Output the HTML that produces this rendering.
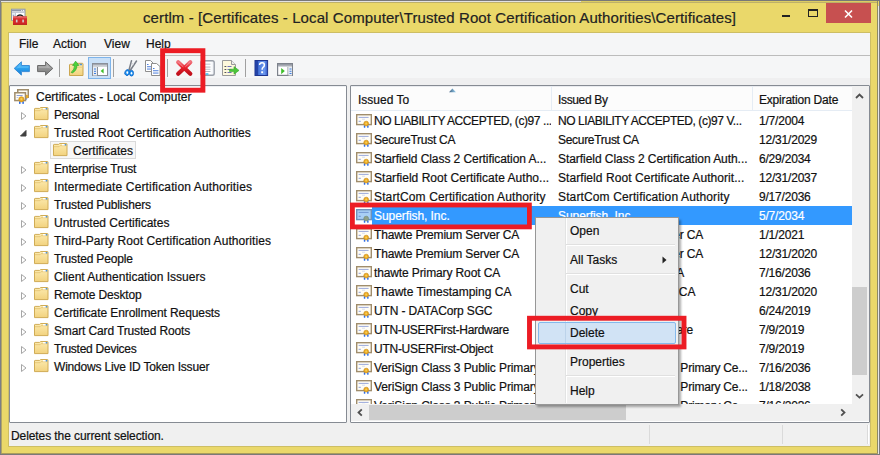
<!DOCTYPE html>
<html><head><meta charset="utf-8">
<style>
*{box-sizing:border-box}
html,body{margin:0;padding:0}
body{width:880px;height:455px;position:relative;overflow:hidden;background:#EAD86A;font-family:"Liberation Sans",sans-serif;font-size:12px;color:#111}
.a{position:absolute}
.t{position:absolute;white-space:pre;line-height:12px;font-size:12px;-webkit-text-stroke:0.2px currentColor}
svg{position:absolute;overflow:visible}
.clip{position:absolute;overflow:hidden}
.in{position:absolute}
</style></head><body>
<svg width="0" height="0" style="position:absolute;left:0;top:0">
<defs>
<linearGradient id="gfold" x1="0" y1="0" x2="0" y2="1"><stop offset="0" stop-color="#FCEBB0"/><stop offset="1" stop-color="#F2D27E"/></linearGradient>
<linearGradient id="gback" x1="0" y1="0" x2="0" y2="1"><stop offset="0" stop-color="#5EC4FA"/><stop offset="0.5" stop-color="#2AA0EE"/><stop offset="1" stop-color="#1878D0"/></linearGradient>
<linearGradient id="gfwd" x1="0" y1="0" x2="0" y2="1"><stop offset="0" stop-color="#B4B4B4"/><stop offset="0.5" stop-color="#949494"/><stop offset="1" stop-color="#747474"/></linearGradient>
<linearGradient id="ghelp" x1="0" y1="0" x2="1" y2="0"><stop offset="0" stop-color="#1C3A9E"/><stop offset="0.3" stop-color="#4A78DC"/><stop offset="0.75" stop-color="#6A96EE"/><stop offset="1" stop-color="#3458C4"/></linearGradient>
<linearGradient id="gx" x1="0" y1="0" x2="0" y2="1"><stop offset="0" stop-color="#F0707A"/><stop offset="0.45" stop-color="#E8202C"/><stop offset="1" stop-color="#C0101C"/></linearGradient>
</defs></svg>
<!-- frame lines -->
<div class="a" style="left:0;top:0;width:880px;height:1px;background:#787878"></div>
<div class="a" style="left:1px;top:1px;width:580px;height:1px;background:#e2e2e2"></div><div class="a" style="left:581px;top:1px;width:297px;height:1px;background:#DCCC62"></div>
<div class="a" style="left:1px;top:2px;width:876px;height:1px;background:#bdb06a"></div>
<div class="a" style="left:0;top:0;width:1px;height:455px;background:#7c7e86"></div>
<div class="a" style="left:1px;top:2px;width:1px;height:452px;background:#b0a567"></div>
<div class="a" style="left:877px;top:1px;width:1px;height:454px;background:#8d8a66"></div>
<div class="a" style="left:878px;top:6px;width:1px;height:448px;background:#e6e6e6"></div>
<div class="a" style="left:879px;top:0;width:1px;height:455px;background:#7a7a7a"></div>
<div class="a" style="left:1px;top:453px;width:877px;height:1px;background:#a99d5c"></div>
<div class="a" style="left:0;top:454px;width:880px;height:1px;background:#7a7a7a"></div>

<!-- title icon -->
<svg style="left:11px;top:8px" width="17" height="17" viewBox="0 0 17 17">
 <rect x="0.5" y="1.2" width="13.5" height="11" fill="#fff" stroke="#8E97AA"/>
 <rect x="1" y="1.7" width="12.5" height="1.7" fill="#8E97AA"/>
 <rect x="10.2" y="2.1" width="1" height="0.9" fill="#fff"/><rect x="12" y="2.1" width="1" height="0.9" fill="#fff"/>
 <rect x="1" y="4.2" width="12.5" height="0.8" fill="#B5BDCC"/>
 <rect x="1" y="5" width="3" height="7" fill="#E8ECF2"/>
 <rect x="4" y="5" width="0.8" height="7" fill="#B5BDCC"/>
 <rect x="1.8" y="6.8" width="1.5" height="1" fill="#8090B0"/>
 <path d="M5.6 8.8Q9 5.4 12.4 8.8" fill="none" stroke="#1E1E1E" stroke-width="1.4"/>
 <rect x="2" y="8.5" width="14" height="8.2" fill="#D42A2A"/>
 <rect x="2" y="8.5" width="14" height="1.8" fill="#E65A5A"/>
 <rect x="2" y="15.8" width="14" height="0.9" fill="#B01818"/>
 <rect x="4.9" y="11.6" width="1.6" height="2.8" fill="#CFCFCF"/>
 <rect x="11.3" y="11.6" width="1.6" height="2.8" fill="#CFCFCF"/>
</svg>

<!-- title -->
<div class="t" style="left:143px;top:10px;font-size:15px;line-height:15px;color:#222;letter-spacing:0.1px">certlm - [Certificates - Local Computer\Trusted Root Certification Authorities\Certificates]</div>

<!-- window buttons -->
<div class="a" style="left:782px;top:15px;width:8px;height:2px;background:#222"></div>
<div class="a" style="left:808px;top:9px;width:10px;height:8px;border:1px solid #222;border-top-width:2px"></div>
<div class="a" style="left:826px;top:3px;width:45px;height:20px;background:#C75050"></div>
<svg style="left:844px;top:10px" width="9" height="8" viewBox="0 0 9 8"><path d="M1 0.5L8 7.5M8 0.5L1 7.5" stroke="#fff" stroke-width="1.6"/></svg>

<!-- content area -->
<div class="a" style="left:8px;top:32px;width:863px;height:415px;background:#F0F0F0;border:1px solid #CDBE64"></div>
<!-- menubar -->
<div class="a" style="left:9px;top:33px;width:861px;height:22px;background:#F5F6F7"></div>
<div class="a" style="left:9px;top:55px;width:861px;height:1px;background:#BCBCBC"></div>
<div class="a" style="left:9px;top:56px;width:861px;height:22px;background:#F5F6F7"></div>
<div class="a" style="left:9px;top:78px;width:861px;height:7px;background:#EFEFF0"></div>

<div class="t" style="left:19px;top:38px">File</div>
<div class="t" style="left:53px;top:38px">Action</div>
<div class="t" style="left:104px;top:38px">View</div>
<div class="t" style="left:146px;top:38px">Help</div>

<!-- toolbar -->
<svg style="left:13px;top:61px" width="17" height="15" viewBox="0 0 17 15">
 <path d="M1.2 7.4L8.4 0.8V4.5H16.4V10.6H8.4V14.1Z" fill="url(#gback)" stroke="#3C8ED8" stroke-width="1" stroke-linejoin="round"/>
 <path d="M3 7.4L7.4 3.4V5.5H15.4V6.8H7.4Z" fill="#7CD0FF" opacity="0.45"/>
</svg>
<svg style="left:37px;top:61px" width="17" height="15" viewBox="0 0 17 15">
 <path d="M15.8 7.4L8.6 0.8V4.5H0.6V10.6H8.6V14.1Z" fill="url(#gfwd)" stroke="#6A6A6A" stroke-width="1" stroke-linejoin="round"/>
 <path d="M14 7.4L9.6 3.4V5.5H1.6V6.8H9.6Z" fill="#C8C8C8" opacity="0.5"/>
</svg>
<div class="a" style="left:59px;top:59px;width:1px;height:18px;background:#A0A0A0"></div>
<!-- up folder -->
<svg style="left:69px;top:60px" width="15" height="17" viewBox="0 0 15 17">
 <path d="M0.5 15.5V5Q0.5 4.3 1.2 4.3H5.8L6.8 3.3H13.3Q14 3.3 14 4V15.5Z" fill="url(#gfold)" stroke="#CBA650" stroke-width="1"/>
 <path d="M7 7.2H13.5" stroke="#E6C878" stroke-width="0.8"/>
 <rect x="10.6" y="3.8" width="2.4" height="1.4" rx="0.5" fill="#4F95DA"/>
 <path d="M2.2 12.4Q5.6 9.4 5.6 5.4H3.6L6.6 1.2L9.9 5.4H7.9Q7.9 10.4 3.2 13Z" fill="#4CD43C" stroke="#2EA82A" stroke-width="0.7"/>
</svg>
<!-- pressed button -->
<div class="a" style="left:88px;top:57px;width:23px;height:22px;background:#C9E0F7;border:1px solid #7EB4EA"></div>
<svg style="left:92px;top:63px" width="16" height="13" viewBox="0 0 16 13">
 <rect x="0.5" y="0.5" width="15" height="12" fill="#fff" stroke="#8A8F99"/>
 <rect x="1" y="1" width="14" height="1.6" fill="#A4A9B2"/>
 <rect x="1" y="3.2" width="14" height="0.8" fill="#C4C8CF"/>
 <rect x="5" y="4" width="1" height="8.5" fill="#8A8F99"/>
 <rect x="1" y="4" width="4" height="8.5" fill="#E8ECF2"/>
 <rect x="2" y="5.5" width="2" height="1" fill="#3F7FE0"/><rect x="2" y="7.8" width="2" height="1" fill="#3F7FE0"/><rect x="2" y="10" width="2" height="1" fill="#3F7FE0"/>
 <path d="M8.6 8L11.6 5.4V10.6Z" fill="#3FBF2A"/>
</svg>
<div class="a" style="left:113px;top:59px;width:1px;height:18px;background:#A0A0A0"></div>
<!-- scissors -->
<svg style="left:124px;top:60px" width="14" height="17" viewBox="0 0 14 17">
 <path d="M5 10L7.5 0.8M6.5 10L12.5 1" stroke="#7A7F88" stroke-width="1.5" stroke-linecap="round"/>
 <path d="M7.5 3L10 5" stroke="#C0C4CC" stroke-width="0.8"/>
 <ellipse cx="3.3" cy="12.6" rx="2.4" ry="3" fill="#1E90F0" stroke="#0C66C8" stroke-width="0.8" transform="rotate(25 3.3 12.6)"/>
 <ellipse cx="7.5" cy="13.2" rx="2" ry="2.9" fill="#1E90F0" stroke="#0C66C8" stroke-width="0.8"/>
 <ellipse cx="3.3" cy="12.6" rx="0.9" ry="1.3" fill="#fff"/>
 <ellipse cx="7.5" cy="13.3" rx="0.8" ry="1.3" fill="#fff"/>
</svg>
<!-- copy -->
<svg style="left:145px;top:60px" width="16" height="16" viewBox="0 0 16 16">
 <path d="M0.5 0.5H5.5L8 3V11.5H0.5Z" fill="#fff" stroke="#8E8E8E"/>
 <rect x="2" y="4" width="1.5" height="0.9" fill="#3A70D8"/><rect x="2" y="6.3" width="4.5" height="0.9" fill="#3A70D8"/><rect x="2" y="8.6" width="4.5" height="0.9" fill="#3A70D8"/>
 <path d="M6.5 3.5H11.5L15 6.5V15.5H6.5Z" fill="#fff" stroke="#8E8E8E"/>
 <rect x="8" y="8" width="1.5" height="0.9" fill="#3A70D8"/><rect x="8" y="10.3" width="5.5" height="0.9" fill="#3A70D8"/><rect x="8" y="12.6" width="5.5" height="0.9" fill="#3A70D8"/>
</svg>
<div class="a" style="left:167px;top:59px;width:1px;height:18px;background:#A0A0A0"></div>
<!-- delete X -->
<svg style="left:176px;top:60px" width="17" height="16" viewBox="0 0 17 16">
 <path d="M2.2 2.2L14.3 13.8M14.3 2.2L2.2 13.8" stroke="url(#gx)" stroke-width="4.2" stroke-linecap="round"/>
 <path d="M2.6 2.4L7 6.6M13.9 2.4L9.6 6.6" stroke="#F7A0A8" stroke-width="1" stroke-linecap="round" opacity="0.7"/>
</svg>
<!-- properties -->
<svg style="left:200px;top:60px" width="15" height="16" viewBox="0 0 15 16">
 <rect x="0.8" y="0.8" width="13.4" height="14.4" rx="1.8" fill="#F4F6FA" stroke="#9A9FA8" stroke-width="1.4"/>
 <rect x="2" y="2" width="9.5" height="12" fill="#FFFFFF"/>
 <rect x="2.5" y="3.6" width="8" height="1.2" fill="#C4CAD6"/>
 <rect x="3" y="6.6" width="7.5" height="0.9" fill="#A8AEB8"/><rect x="3" y="8.8" width="7.5" height="0.9" fill="#B8BEC8"/><rect x="3" y="11" width="7.5" height="0.9" fill="#A8AEB8"/>
 <rect x="5.2" y="13.2" width="3.4" height="1.6" rx="0.7" fill="#30C0F4"/>
</svg>
<!-- export -->
<svg style="left:222px;top:60px" width="18" height="16" viewBox="0 0 18 16">
 <path d="M0.5 0.5H9.5L13.5 4.5V15.5H0.5Z" fill="#FDF8DC" stroke="#9A9A9A"/>
 <path d="M9.5 0.5V4.5H13.5" fill="#eee" stroke="#9A9A9A"/>
 <rect x="2.5" y="6" width="1.8" height="1" fill="#555"/><rect x="5.5" y="6" width="4" height="1" fill="#7070B8"/>
 <rect x="2.5" y="9" width="1.8" height="1" fill="#555"/><rect x="5.5" y="9" width="4" height="1" fill="#7070B8"/>
 <rect x="2.5" y="12" width="1.8" height="1" fill="#555"/><rect x="5.5" y="12" width="4" height="1" fill="#7070B8"/>
 <path d="M7.5 9.2H12V6.6L17 10.4L12 14.2V11.6H7.5Z" fill="#4CC63A" stroke="#38A82A" stroke-width="0.6"/>
</svg>
<div class="a" style="left:245px;top:59px;width:1px;height:18px;background:#A0A0A0"></div>
<!-- help -->
<svg style="left:254px;top:60px" width="14" height="16" viewBox="0 0 14 16">
 <rect x="1" y="0.5" width="12.6" height="15" fill="url(#ghelp)" stroke="#1E3590"/>
 <rect x="1.5" y="1" width="2.6" height="14" fill="#2444A8"/>
 <path d="M5.6 5Q5.6 2.8 8 2.8Q10.4 2.8 10.4 5Q10.4 6.5 9 7.4Q8.1 8 8.1 9.8" fill="none" stroke="#fff" stroke-width="1.5"/>
 <rect x="7.2" y="11.3" width="1.9" height="1.9" fill="#fff"/>
</svg>
<!-- action pane -->
<svg style="left:277px;top:63px" width="16" height="13" viewBox="0 0 16 13">
 <rect x="0.6" y="0.6" width="14.8" height="11.8" fill="#fff" stroke="#7E838C" stroke-width="1.2"/>
 <rect x="1" y="1" width="14" height="1.8" fill="#959AA4"/>
 <rect x="1" y="3.2" width="14" height="0.8" fill="#C4C8CF"/>
 <rect x="10.5" y="4" width="1" height="8.5" fill="#8A8F99"/>
 <rect x="11.5" y="4" width="3.5" height="8.5" fill="#E8ECF2"/>
 <rect x="12.5" y="5.5" width="2" height="1" fill="#3F7FE0"/><rect x="12.5" y="7.8" width="2" height="1" fill="#3F7FE0"/><rect x="12.5" y="10" width="2" height="1" fill="#3F7FE0"/>
 <path d="M4.2 5L7.8 8.1L4.2 11.2Z" fill="#3FBF2A"/>
</svg>

<!-- panes -->
<div class="a" style="left:9px;top:85px;width:338px;height:338px;background:#fff;border:1px solid #868B93;border-radius:1px"></div>
<div class="a" style="left:350px;top:85px;width:520px;height:338px;background:#fff;border:1px solid #868B93;border-radius:1px"></div>
<div class="a" style="left:10px;top:86px;width:336px;height:1px;background:#EEF0F3"></div>
<div class="a" style="left:351px;top:86px;width:518px;height:1px;background:#E9EBEF"></div>
<div class="a" style="left:351px;top:87px;width:501px;height:23px;background:#FCFCFC"></div>

<!-- tree root -->
<svg style="left:14px;top:88px" width="16" height="17" viewBox="0 0 16 17">
 <rect x="3.75" y="1.75" width="10.5" height="7.5" fill="#FFFDF6" stroke="#A08D6C" stroke-width="1.5"/>
 <path d="M12 10L12.5 12.2L13.4 10.6Z" fill="#2F6EE6"/>
 <circle cx="12.5" cy="8.6" r="1.9" fill="#ECAA22"/>
 <rect x="0.85" y="4.75" width="10.6" height="7.8" fill="#FFFDF6" stroke="#A08D6C" stroke-width="1.5"/>
 <rect x="2.6" y="7" width="6" height="1" fill="#8FA0D8"/>
 <rect x="2.6" y="9" width="1.8" height="1" fill="#C0C8EA"/>
 <rect x="5" y="13.3" width="1.6" height="2.6" rx="0.6" fill="#2F6EE6"/>
 <rect x="8.3" y="13.3" width="1.6" height="2.6" rx="0.6" fill="#2F6EE6"/>
 <circle cx="7.4" cy="11.3" r="2.6" fill="#ECAA22" stroke="#C98A12" stroke-width="0.6"/>
 <circle cx="7.4" cy="11.1" r="1.1" fill="#F6CF5A"/>
</svg>
<div class="t" style="left:36px;top:91px">Certificates - Local Computer</div>
<div class="clip" style="left:10px;top:86px;width:336px;height:336px"><div class="in" style="left:-10px;top:-86px;width:880px;height:455px">
<svg style="left:21px;top:112px" width="6" height="8" viewBox="0 0 6 8"><path d="M0.5 0.5L5 4L0.5 7.5Z" fill="none" stroke="#a6a6a6" stroke-width="1"/></svg>
<svg style="left:34px;top:107px" width="15" height="14" viewBox="0 0 15 14"><path d="M0.5 12.6V2Q0.5 1.4 1.1 1.4H5.6L6.6 0.5H13.4Q14 0.5 14 1.1V12.6Z" fill="url(#gfold)" stroke="#D0AC55" stroke-width="1"/>
 <path d="M1 3.7H6.1L7.1 2.7H13.5" fill="none" stroke="#E4C474" stroke-width="0.9"/>
 <rect x="9" y="1" width="3" height="1.4" fill="#FFFFFF"/>
 <rect x="11.6" y="0.9" width="1.8" height="1.5" rx="0.5" fill="#4F95DA"/></svg>
<div class="t" style="left:54px;top:109px;letter-spacing:-0.27px">Personal</div>
<svg style="left:20px;top:130px" width="7" height="7" viewBox="0 0 7 7"><path d="M6 0.5L6 6L0.5 6Z" fill="#404040" stroke="#404040" stroke-width="1"/></svg>
<svg style="left:34px;top:125px" width="15" height="14" viewBox="0 0 15 14"><path d="M0.5 12.6V2Q0.5 1.4 1.1 1.4H5.6L6.6 0.5H13.4Q14 0.5 14 1.1V12.6Z" fill="url(#gfold)" stroke="#D0AC55" stroke-width="1"/>
 <path d="M1 3.7H6.1L7.1 2.7H13.5" fill="none" stroke="#E4C474" stroke-width="0.9"/>
 <rect x="9" y="1" width="3" height="1.4" fill="#FFFFFF"/>
 <rect x="11.6" y="0.9" width="1.8" height="1.5" rx="0.5" fill="#4F95DA"/></svg>
<div class="t" style="left:54px;top:127px;letter-spacing:0.05px">Trusted Root Certification Authorities</div>
<div class="a" style="left:50px;top:141px;width:86px;height:18px;background:#F7F7F7;border:1px solid #DADADA"></div>
<svg style="left:53px;top:143px" width="15" height="14" viewBox="0 0 15 14"><path d="M0.5 12.6V2Q0.5 1.4 1.1 1.4H5.6L6.6 0.5H13.4Q14 0.5 14 1.1V12.6Z" fill="url(#gfold)" stroke="#D0AC55" stroke-width="1"/>
 <path d="M1 3.7H6.1L7.1 2.7H13.5" fill="none" stroke="#E4C474" stroke-width="0.9"/>
 <rect x="9" y="1" width="3" height="1.4" fill="#FFFFFF"/>
 <rect x="11.6" y="0.9" width="1.8" height="1.5" rx="0.5" fill="#4F95DA"/></svg>
<div class="t" style="left:73px;top:145px;letter-spacing:0px">Certificates</div>
<svg style="left:21px;top:166px" width="6" height="8" viewBox="0 0 6 8"><path d="M0.5 0.5L5 4L0.5 7.5Z" fill="none" stroke="#a6a6a6" stroke-width="1"/></svg>
<svg style="left:34px;top:161px" width="15" height="14" viewBox="0 0 15 14"><path d="M0.5 12.6V2Q0.5 1.4 1.1 1.4H5.6L6.6 0.5H13.4Q14 0.5 14 1.1V12.6Z" fill="url(#gfold)" stroke="#D0AC55" stroke-width="1"/>
 <path d="M1 3.7H6.1L7.1 2.7H13.5" fill="none" stroke="#E4C474" stroke-width="0.9"/>
 <rect x="9" y="1" width="3" height="1.4" fill="#FFFFFF"/>
 <rect x="11.6" y="0.9" width="1.8" height="1.5" rx="0.5" fill="#4F95DA"/></svg>
<div class="t" style="left:54px;top:163px;letter-spacing:-0.15px">Enterprise Trust</div>
<svg style="left:21px;top:184px" width="6" height="8" viewBox="0 0 6 8"><path d="M0.5 0.5L5 4L0.5 7.5Z" fill="none" stroke="#a6a6a6" stroke-width="1"/></svg>
<svg style="left:34px;top:179px" width="15" height="14" viewBox="0 0 15 14"><path d="M0.5 12.6V2Q0.5 1.4 1.1 1.4H5.6L6.6 0.5H13.4Q14 0.5 14 1.1V12.6Z" fill="url(#gfold)" stroke="#D0AC55" stroke-width="1"/>
 <path d="M1 3.7H6.1L7.1 2.7H13.5" fill="none" stroke="#E4C474" stroke-width="0.9"/>
 <rect x="9" y="1" width="3" height="1.4" fill="#FFFFFF"/>
 <rect x="11.6" y="0.9" width="1.8" height="1.5" rx="0.5" fill="#4F95DA"/></svg>
<div class="t" style="left:54px;top:181px;letter-spacing:0.14px">Intermediate Certification Authorities</div>
<svg style="left:21px;top:202px" width="6" height="8" viewBox="0 0 6 8"><path d="M0.5 0.5L5 4L0.5 7.5Z" fill="none" stroke="#a6a6a6" stroke-width="1"/></svg>
<svg style="left:34px;top:197px" width="15" height="14" viewBox="0 0 15 14"><path d="M0.5 12.6V2Q0.5 1.4 1.1 1.4H5.6L6.6 0.5H13.4Q14 0.5 14 1.1V12.6Z" fill="url(#gfold)" stroke="#D0AC55" stroke-width="1"/>
 <path d="M1 3.7H6.1L7.1 2.7H13.5" fill="none" stroke="#E4C474" stroke-width="0.9"/>
 <rect x="9" y="1" width="3" height="1.4" fill="#FFFFFF"/>
 <rect x="11.6" y="0.9" width="1.8" height="1.5" rx="0.5" fill="#4F95DA"/></svg>
<div class="t" style="left:54px;top:199px;letter-spacing:-0.15px">Trusted Publishers</div>
<svg style="left:21px;top:220px" width="6" height="8" viewBox="0 0 6 8"><path d="M0.5 0.5L5 4L0.5 7.5Z" fill="none" stroke="#a6a6a6" stroke-width="1"/></svg>
<svg style="left:34px;top:215px" width="15" height="14" viewBox="0 0 15 14"><path d="M0.5 12.6V2Q0.5 1.4 1.1 1.4H5.6L6.6 0.5H13.4Q14 0.5 14 1.1V12.6Z" fill="url(#gfold)" stroke="#D0AC55" stroke-width="1"/>
 <path d="M1 3.7H6.1L7.1 2.7H13.5" fill="none" stroke="#E4C474" stroke-width="0.9"/>
 <rect x="9" y="1" width="3" height="1.4" fill="#FFFFFF"/>
 <rect x="11.6" y="0.9" width="1.8" height="1.5" rx="0.5" fill="#4F95DA"/></svg>
<div class="t" style="left:54px;top:217px;letter-spacing:0px">Untrusted Certificates</div>
<svg style="left:21px;top:238px" width="6" height="8" viewBox="0 0 6 8"><path d="M0.5 0.5L5 4L0.5 7.5Z" fill="none" stroke="#a6a6a6" stroke-width="1"/></svg>
<svg style="left:34px;top:233px" width="15" height="14" viewBox="0 0 15 14"><path d="M0.5 12.6V2Q0.5 1.4 1.1 1.4H5.6L6.6 0.5H13.4Q14 0.5 14 1.1V12.6Z" fill="url(#gfold)" stroke="#D0AC55" stroke-width="1"/>
 <path d="M1 3.7H6.1L7.1 2.7H13.5" fill="none" stroke="#E4C474" stroke-width="0.9"/>
 <rect x="9" y="1" width="3" height="1.4" fill="#FFFFFF"/>
 <rect x="11.6" y="0.9" width="1.8" height="1.5" rx="0.5" fill="#4F95DA"/></svg>
<div class="t" style="left:54px;top:235px;letter-spacing:0.07px">Third-Party Root Certification Authorities</div>
<svg style="left:21px;top:256px" width="6" height="8" viewBox="0 0 6 8"><path d="M0.5 0.5L5 4L0.5 7.5Z" fill="none" stroke="#a6a6a6" stroke-width="1"/></svg>
<svg style="left:34px;top:251px" width="15" height="14" viewBox="0 0 15 14"><path d="M0.5 12.6V2Q0.5 1.4 1.1 1.4H5.6L6.6 0.5H13.4Q14 0.5 14 1.1V12.6Z" fill="url(#gfold)" stroke="#D0AC55" stroke-width="1"/>
 <path d="M1 3.7H6.1L7.1 2.7H13.5" fill="none" stroke="#E4C474" stroke-width="0.9"/>
 <rect x="9" y="1" width="3" height="1.4" fill="#FFFFFF"/>
 <rect x="11.6" y="0.9" width="1.8" height="1.5" rx="0.5" fill="#4F95DA"/></svg>
<div class="t" style="left:54px;top:253px;letter-spacing:-0.15px">Trusted People</div>
<svg style="left:21px;top:274px" width="6" height="8" viewBox="0 0 6 8"><path d="M0.5 0.5L5 4L0.5 7.5Z" fill="none" stroke="#a6a6a6" stroke-width="1"/></svg>
<svg style="left:34px;top:269px" width="15" height="14" viewBox="0 0 15 14"><path d="M0.5 12.6V2Q0.5 1.4 1.1 1.4H5.6L6.6 0.5H13.4Q14 0.5 14 1.1V12.6Z" fill="url(#gfold)" stroke="#D0AC55" stroke-width="1"/>
 <path d="M1 3.7H6.1L7.1 2.7H13.5" fill="none" stroke="#E4C474" stroke-width="0.9"/>
 <rect x="9" y="1" width="3" height="1.4" fill="#FFFFFF"/>
 <rect x="11.6" y="0.9" width="1.8" height="1.5" rx="0.5" fill="#4F95DA"/></svg>
<div class="t" style="left:54px;top:271px;letter-spacing:0px">Client Authentication Issuers</div>
<svg style="left:21px;top:292px" width="6" height="8" viewBox="0 0 6 8"><path d="M0.5 0.5L5 4L0.5 7.5Z" fill="none" stroke="#a6a6a6" stroke-width="1"/></svg>
<svg style="left:34px;top:287px" width="15" height="14" viewBox="0 0 15 14"><path d="M0.5 12.6V2Q0.5 1.4 1.1 1.4H5.6L6.6 0.5H13.4Q14 0.5 14 1.1V12.6Z" fill="url(#gfold)" stroke="#D0AC55" stroke-width="1"/>
 <path d="M1 3.7H6.1L7.1 2.7H13.5" fill="none" stroke="#E4C474" stroke-width="0.9"/>
 <rect x="9" y="1" width="3" height="1.4" fill="#FFFFFF"/>
 <rect x="11.6" y="0.9" width="1.8" height="1.5" rx="0.5" fill="#4F95DA"/></svg>
<div class="t" style="left:54px;top:289px;letter-spacing:-0.13px">Remote Desktop</div>
<svg style="left:21px;top:310px" width="6" height="8" viewBox="0 0 6 8"><path d="M0.5 0.5L5 4L0.5 7.5Z" fill="none" stroke="#a6a6a6" stroke-width="1"/></svg>
<svg style="left:34px;top:305px" width="15" height="14" viewBox="0 0 15 14"><path d="M0.5 12.6V2Q0.5 1.4 1.1 1.4H5.6L6.6 0.5H13.4Q14 0.5 14 1.1V12.6Z" fill="url(#gfold)" stroke="#D0AC55" stroke-width="1"/>
 <path d="M1 3.7H6.1L7.1 2.7H13.5" fill="none" stroke="#E4C474" stroke-width="0.9"/>
 <rect x="9" y="1" width="3" height="1.4" fill="#FFFFFF"/>
 <rect x="11.6" y="0.9" width="1.8" height="1.5" rx="0.5" fill="#4F95DA"/></svg>
<div class="t" style="left:54px;top:307px;letter-spacing:-0.09px">Certificate Enrollment Requests</div>
<svg style="left:21px;top:328px" width="6" height="8" viewBox="0 0 6 8"><path d="M0.5 0.5L5 4L0.5 7.5Z" fill="none" stroke="#a6a6a6" stroke-width="1"/></svg>
<svg style="left:34px;top:323px" width="15" height="14" viewBox="0 0 15 14"><path d="M0.5 12.6V2Q0.5 1.4 1.1 1.4H5.6L6.6 0.5H13.4Q14 0.5 14 1.1V12.6Z" fill="url(#gfold)" stroke="#D0AC55" stroke-width="1"/>
 <path d="M1 3.7H6.1L7.1 2.7H13.5" fill="none" stroke="#E4C474" stroke-width="0.9"/>
 <rect x="9" y="1" width="3" height="1.4" fill="#FFFFFF"/>
 <rect x="11.6" y="0.9" width="1.8" height="1.5" rx="0.5" fill="#4F95DA"/></svg>
<div class="t" style="left:54px;top:325px;letter-spacing:-0.14px">Smart Card Trusted Roots</div>
<svg style="left:21px;top:346px" width="6" height="8" viewBox="0 0 6 8"><path d="M0.5 0.5L5 4L0.5 7.5Z" fill="none" stroke="#a6a6a6" stroke-width="1"/></svg>
<svg style="left:34px;top:341px" width="15" height="14" viewBox="0 0 15 14"><path d="M0.5 12.6V2Q0.5 1.4 1.1 1.4H5.6L6.6 0.5H13.4Q14 0.5 14 1.1V12.6Z" fill="url(#gfold)" stroke="#D0AC55" stroke-width="1"/>
 <path d="M1 3.7H6.1L7.1 2.7H13.5" fill="none" stroke="#E4C474" stroke-width="0.9"/>
 <rect x="9" y="1" width="3" height="1.4" fill="#FFFFFF"/>
 <rect x="11.6" y="0.9" width="1.8" height="1.5" rx="0.5" fill="#4F95DA"/></svg>
<div class="t" style="left:54px;top:343px;letter-spacing:-0.25px">Trusted Devices</div>
<svg style="left:21px;top:364px" width="6" height="8" viewBox="0 0 6 8"><path d="M0.5 0.5L5 4L0.5 7.5Z" fill="none" stroke="#a6a6a6" stroke-width="1"/></svg>
<svg style="left:34px;top:359px" width="15" height="14" viewBox="0 0 15 14"><path d="M0.5 12.6V2Q0.5 1.4 1.1 1.4H5.6L6.6 0.5H13.4Q14 0.5 14 1.1V12.6Z" fill="url(#gfold)" stroke="#D0AC55" stroke-width="1"/>
 <path d="M1 3.7H6.1L7.1 2.7H13.5" fill="none" stroke="#E4C474" stroke-width="0.9"/>
 <rect x="9" y="1" width="3" height="1.4" fill="#FFFFFF"/>
 <rect x="11.6" y="0.9" width="1.8" height="1.5" rx="0.5" fill="#4F95DA"/></svg>
<div class="t" style="left:54px;top:361px;letter-spacing:-0.19px">Windows Live ID Token Issuer</div>
</div></div>
<div class="clip" style="left:351px;top:111px;width:501px;height:293px"><div class="in" style="left:-351px;top:-111px;width:880px;height:455px">
<svg style="left:356px;top:114px" width="16" height="15" viewBox="0 0 16 15"><rect x="0.7" y="0.7" width="14.6" height="9.9" fill="#FFFDF6" stroke="#A08D6C" stroke-width="1.4"/>
 <rect x="2.6" y="2.9" width="10" height="0.9" fill="#8FA0D8"/>
 <rect x="6" y="4.8" width="3" height="0.7" fill="#C7CFEA"/>
 <rect x="2.6" y="6.8" width="2.2" height="1" fill="#8FA0D8"/>
 <rect x="7.8" y="11.2" width="1.5" height="2.6" rx="0.6" fill="#2F6EE6"/>
 <rect x="11.1" y="11.2" width="1.5" height="2.6" rx="0.6" fill="#2F6EE6"/>
 <circle cx="10.2" cy="9.6" r="2.4" fill="#ECAA22" stroke="#C98A12" stroke-width="0.6"/>
 <circle cx="10.2" cy="9.4" r="1" fill="#F6CF5A"/></svg>
<div class="clip" style="left:372px;top:115px;width:179px;height:16px"><div class="t" style="left:2px;top:0;letter-spacing:-0.42px;">NO LIABILITY ACCEPTED, (c)97 ...</div></div>
<div class="clip" style="left:556px;top:115px;width:196px;height:16px"><div class="t" style="left:2px;top:0;letter-spacing:-0.44px;">NO LIABILITY ACCEPTED, (c)97 V...</div></div>
<div class="t" style="left:759px;top:115px;letter-spacing:-0.2px;">1/7/2004</div>
<svg style="left:356px;top:133px" width="16" height="15" viewBox="0 0 16 15"><rect x="0.7" y="0.7" width="14.6" height="9.9" fill="#FFFDF6" stroke="#A08D6C" stroke-width="1.4"/>
 <rect x="2.6" y="2.9" width="10" height="0.9" fill="#8FA0D8"/>
 <rect x="6" y="4.8" width="3" height="0.7" fill="#C7CFEA"/>
 <rect x="2.6" y="6.8" width="2.2" height="1" fill="#8FA0D8"/>
 <rect x="7.8" y="11.2" width="1.5" height="2.6" rx="0.6" fill="#2F6EE6"/>
 <rect x="11.1" y="11.2" width="1.5" height="2.6" rx="0.6" fill="#2F6EE6"/>
 <circle cx="10.2" cy="9.6" r="2.4" fill="#ECAA22" stroke="#C98A12" stroke-width="0.6"/>
 <circle cx="10.2" cy="9.4" r="1" fill="#F6CF5A"/></svg>
<div class="clip" style="left:372px;top:134px;width:179px;height:16px"><div class="t" style="left:2px;top:0;letter-spacing:-0.27px;">SecureTrust CA</div></div>
<div class="clip" style="left:556px;top:134px;width:196px;height:16px"><div class="t" style="left:2px;top:0;letter-spacing:-0.3px;">SecureTrust CA</div></div>
<div class="t" style="left:759px;top:134px;letter-spacing:-0.2px;">12/31/2029</div>
<svg style="left:356px;top:152px" width="16" height="15" viewBox="0 0 16 15"><rect x="0.7" y="0.7" width="14.6" height="9.9" fill="#FFFDF6" stroke="#A08D6C" stroke-width="1.4"/>
 <rect x="2.6" y="2.9" width="10" height="0.9" fill="#8FA0D8"/>
 <rect x="6" y="4.8" width="3" height="0.7" fill="#C7CFEA"/>
 <rect x="2.6" y="6.8" width="2.2" height="1" fill="#8FA0D8"/>
 <rect x="7.8" y="11.2" width="1.5" height="2.6" rx="0.6" fill="#2F6EE6"/>
 <rect x="11.1" y="11.2" width="1.5" height="2.6" rx="0.6" fill="#2F6EE6"/>
 <circle cx="10.2" cy="9.6" r="2.4" fill="#ECAA22" stroke="#C98A12" stroke-width="0.6"/>
 <circle cx="10.2" cy="9.4" r="1" fill="#F6CF5A"/></svg>
<div class="clip" style="left:372px;top:153px;width:179px;height:16px"><div class="t" style="left:2px;top:0;letter-spacing:-0.07px;">Starfield Class 2 Certification A...</div></div>
<div class="clip" style="left:556px;top:153px;width:196px;height:16px"><div class="t" style="left:2px;top:0;letter-spacing:-0.05px;">Starfield Class 2 Certification Auth...</div></div>
<div class="t" style="left:759px;top:153px;letter-spacing:-0.2px;">6/29/2034</div>
<svg style="left:356px;top:171px" width="16" height="15" viewBox="0 0 16 15"><rect x="0.7" y="0.7" width="14.6" height="9.9" fill="#FFFDF6" stroke="#A08D6C" stroke-width="1.4"/>
 <rect x="2.6" y="2.9" width="10" height="0.9" fill="#8FA0D8"/>
 <rect x="6" y="4.8" width="3" height="0.7" fill="#C7CFEA"/>
 <rect x="2.6" y="6.8" width="2.2" height="1" fill="#8FA0D8"/>
 <rect x="7.8" y="11.2" width="1.5" height="2.6" rx="0.6" fill="#2F6EE6"/>
 <rect x="11.1" y="11.2" width="1.5" height="2.6" rx="0.6" fill="#2F6EE6"/>
 <circle cx="10.2" cy="9.6" r="2.4" fill="#ECAA22" stroke="#C98A12" stroke-width="0.6"/>
 <circle cx="10.2" cy="9.4" r="1" fill="#F6CF5A"/></svg>
<div class="clip" style="left:372px;top:172px;width:179px;height:16px"><div class="t" style="left:2px;top:0;letter-spacing:0.03px;">Starfield Root Certificate Autho...</div></div>
<div class="clip" style="left:556px;top:172px;width:196px;height:16px"><div class="t" style="left:2px;top:0;letter-spacing:0.06px;">Starfield Root Certificate Authorit...</div></div>
<div class="t" style="left:759px;top:172px;letter-spacing:-0.2px;">12/31/2037</div>
<svg style="left:356px;top:190px" width="16" height="15" viewBox="0 0 16 15"><rect x="0.7" y="0.7" width="14.6" height="9.9" fill="#FFFDF6" stroke="#A08D6C" stroke-width="1.4"/>
 <rect x="2.6" y="2.9" width="10" height="0.9" fill="#8FA0D8"/>
 <rect x="6" y="4.8" width="3" height="0.7" fill="#C7CFEA"/>
 <rect x="2.6" y="6.8" width="2.2" height="1" fill="#8FA0D8"/>
 <rect x="7.8" y="11.2" width="1.5" height="2.6" rx="0.6" fill="#2F6EE6"/>
 <rect x="11.1" y="11.2" width="1.5" height="2.6" rx="0.6" fill="#2F6EE6"/>
 <circle cx="10.2" cy="9.6" r="2.4" fill="#ECAA22" stroke="#C98A12" stroke-width="0.6"/>
 <circle cx="10.2" cy="9.4" r="1" fill="#F6CF5A"/></svg>
<div class="clip" style="left:372px;top:191px;width:179px;height:16px"><div class="t" style="left:2px;top:0;letter-spacing:0.13px;">StartCom Certification Authority</div></div>
<div class="clip" style="left:556px;top:191px;width:196px;height:16px"><div class="t" style="left:2px;top:0;letter-spacing:0.13px;">StartCom Certification Authority</div></div>
<div class="t" style="left:759px;top:191px;letter-spacing:-0.2px;">9/17/2036</div>
<div class="a" style="left:372px;top:206px;width:480px;height:19px;background:#3399FF"></div>
<svg style="left:356px;top:209px" width="16" height="15" viewBox="0 0 16 15"><rect x="0.7" y="0.7" width="14.6" height="9.9" fill="#A9CFF6" stroke="#6F92B8" stroke-width="1.4"/>
 <rect x="2.6" y="2.9" width="10" height="0.9" fill="#6E92D0"/>
 <rect x="2.6" y="6.8" width="2.2" height="1" fill="#6E92D0"/>
 <rect x="7.8" y="11.2" width="1.5" height="2.6" rx="0.6" fill="#2F6EE6"/>
 <rect x="11.1" y="11.2" width="1.5" height="2.6" rx="0.6" fill="#2F6EE6"/>
 <circle cx="10.2" cy="9.6" r="2.4" fill="#8FA08A" stroke="#6E8870" stroke-width="0.6"/></svg>
<div class="clip" style="left:372px;top:210px;width:179px;height:16px"><div class="t" style="left:2px;top:0;letter-spacing:-0.07px;color:#fff;">Superfish, Inc.</div></div>
<div class="clip" style="left:556px;top:210px;width:196px;height:16px"><div class="t" style="left:2px;top:0;letter-spacing:-0.07px;color:#fff;">Superfish, Inc.</div></div>
<div class="t" style="left:759px;top:210px;letter-spacing:-0.2px;color:#fff;">5/7/2034</div>
<svg style="left:356px;top:228px" width="16" height="15" viewBox="0 0 16 15"><rect x="0.7" y="0.7" width="14.6" height="9.9" fill="#FFFDF6" stroke="#A08D6C" stroke-width="1.4"/>
 <rect x="2.6" y="2.9" width="10" height="0.9" fill="#8FA0D8"/>
 <rect x="6" y="4.8" width="3" height="0.7" fill="#C7CFEA"/>
 <rect x="2.6" y="6.8" width="2.2" height="1" fill="#8FA0D8"/>
 <rect x="7.8" y="11.2" width="1.5" height="2.6" rx="0.6" fill="#2F6EE6"/>
 <rect x="11.1" y="11.2" width="1.5" height="2.6" rx="0.6" fill="#2F6EE6"/>
 <circle cx="10.2" cy="9.6" r="2.4" fill="#ECAA22" stroke="#C98A12" stroke-width="0.6"/>
 <circle cx="10.2" cy="9.4" r="1" fill="#F6CF5A"/></svg>
<div class="clip" style="left:372px;top:229px;width:179px;height:16px"><div class="t" style="left:2px;top:0;letter-spacing:-0.18px;">Thawte Premium Server CA</div></div>
<div class="clip" style="left:556px;top:229px;width:196px;height:16px"><div class="t" style="left:2px;top:0;letter-spacing:-0.18px;">Thawte Premium Server CA</div></div>
<div class="t" style="left:759px;top:229px;letter-spacing:-0.2px;">1/1/2021</div>
<svg style="left:356px;top:247px" width="16" height="15" viewBox="0 0 16 15"><rect x="0.7" y="0.7" width="14.6" height="9.9" fill="#FFFDF6" stroke="#A08D6C" stroke-width="1.4"/>
 <rect x="2.6" y="2.9" width="10" height="0.9" fill="#8FA0D8"/>
 <rect x="6" y="4.8" width="3" height="0.7" fill="#C7CFEA"/>
 <rect x="2.6" y="6.8" width="2.2" height="1" fill="#8FA0D8"/>
 <rect x="7.8" y="11.2" width="1.5" height="2.6" rx="0.6" fill="#2F6EE6"/>
 <rect x="11.1" y="11.2" width="1.5" height="2.6" rx="0.6" fill="#2F6EE6"/>
 <circle cx="10.2" cy="9.6" r="2.4" fill="#ECAA22" stroke="#C98A12" stroke-width="0.6"/>
 <circle cx="10.2" cy="9.4" r="1" fill="#F6CF5A"/></svg>
<div class="clip" style="left:372px;top:248px;width:179px;height:16px"><div class="t" style="left:2px;top:0;letter-spacing:-0.18px;">Thawte Premium Server CA</div></div>
<div class="clip" style="left:556px;top:248px;width:196px;height:16px"><div class="t" style="left:2px;top:0;letter-spacing:-0.18px;">Thawte Premium Server CA</div></div>
<div class="t" style="left:759px;top:248px;letter-spacing:-0.2px;">12/31/2020</div>
<svg style="left:356px;top:266px" width="16" height="15" viewBox="0 0 16 15"><rect x="0.7" y="0.7" width="14.6" height="9.9" fill="#FFFDF6" stroke="#A08D6C" stroke-width="1.4"/>
 <rect x="2.6" y="2.9" width="10" height="0.9" fill="#8FA0D8"/>
 <rect x="6" y="4.8" width="3" height="0.7" fill="#C7CFEA"/>
 <rect x="2.6" y="6.8" width="2.2" height="1" fill="#8FA0D8"/>
 <rect x="7.8" y="11.2" width="1.5" height="2.6" rx="0.6" fill="#2F6EE6"/>
 <rect x="11.1" y="11.2" width="1.5" height="2.6" rx="0.6" fill="#2F6EE6"/>
 <circle cx="10.2" cy="9.6" r="2.4" fill="#ECAA22" stroke="#C98A12" stroke-width="0.6"/>
 <circle cx="10.2" cy="9.4" r="1" fill="#F6CF5A"/></svg>
<div class="clip" style="left:372px;top:267px;width:179px;height:16px"><div class="t" style="left:2px;top:0;letter-spacing:-0.12px;">thawte Primary Root CA</div></div>
<div class="clip" style="left:556px;top:267px;width:196px;height:16px"><div class="t" style="left:2px;top:0;letter-spacing:-0.12px;">thawte Primary Root CA</div></div>
<div class="t" style="left:759px;top:267px;letter-spacing:-0.2px;">7/16/2036</div>
<svg style="left:356px;top:285px" width="16" height="15" viewBox="0 0 16 15"><rect x="0.7" y="0.7" width="14.6" height="9.9" fill="#FFFDF6" stroke="#A08D6C" stroke-width="1.4"/>
 <rect x="2.6" y="2.9" width="10" height="0.9" fill="#8FA0D8"/>
 <rect x="6" y="4.8" width="3" height="0.7" fill="#C7CFEA"/>
 <rect x="2.6" y="6.8" width="2.2" height="1" fill="#8FA0D8"/>
 <rect x="7.8" y="11.2" width="1.5" height="2.6" rx="0.6" fill="#2F6EE6"/>
 <rect x="11.1" y="11.2" width="1.5" height="2.6" rx="0.6" fill="#2F6EE6"/>
 <circle cx="10.2" cy="9.6" r="2.4" fill="#ECAA22" stroke="#C98A12" stroke-width="0.6"/>
 <circle cx="10.2" cy="9.4" r="1" fill="#F6CF5A"/></svg>
<div class="clip" style="left:372px;top:286px;width:179px;height:16px"><div class="t" style="left:2px;top:0;letter-spacing:0px;">Thawte Timestamping CA</div></div>
<div class="clip" style="left:556px;top:286px;width:196px;height:16px"><div class="t" style="left:2px;top:0;letter-spacing:0px;">Thawte Timestamping CA</div></div>
<div class="t" style="left:759px;top:286px;letter-spacing:-0.2px;">12/31/2020</div>
<svg style="left:356px;top:304px" width="16" height="15" viewBox="0 0 16 15"><rect x="0.7" y="0.7" width="14.6" height="9.9" fill="#FFFDF6" stroke="#A08D6C" stroke-width="1.4"/>
 <rect x="2.6" y="2.9" width="10" height="0.9" fill="#8FA0D8"/>
 <rect x="6" y="4.8" width="3" height="0.7" fill="#C7CFEA"/>
 <rect x="2.6" y="6.8" width="2.2" height="1" fill="#8FA0D8"/>
 <rect x="7.8" y="11.2" width="1.5" height="2.6" rx="0.6" fill="#2F6EE6"/>
 <rect x="11.1" y="11.2" width="1.5" height="2.6" rx="0.6" fill="#2F6EE6"/>
 <circle cx="10.2" cy="9.6" r="2.4" fill="#ECAA22" stroke="#C98A12" stroke-width="0.6"/>
 <circle cx="10.2" cy="9.4" r="1" fill="#F6CF5A"/></svg>
<div class="clip" style="left:372px;top:305px;width:179px;height:16px"><div class="t" style="left:2px;top:0;letter-spacing:-0.14px;">UTN - DATACorp SGC</div></div>
<div class="clip" style="left:556px;top:305px;width:196px;height:16px"><div class="t" style="left:2px;top:0;letter-spacing:-0.14px;">UTN - DATACorp SGC</div></div>
<div class="t" style="left:759px;top:305px;letter-spacing:-0.2px;">6/24/2019</div>
<svg style="left:356px;top:323px" width="16" height="15" viewBox="0 0 16 15"><rect x="0.7" y="0.7" width="14.6" height="9.9" fill="#FFFDF6" stroke="#A08D6C" stroke-width="1.4"/>
 <rect x="2.6" y="2.9" width="10" height="0.9" fill="#8FA0D8"/>
 <rect x="6" y="4.8" width="3" height="0.7" fill="#C7CFEA"/>
 <rect x="2.6" y="6.8" width="2.2" height="1" fill="#8FA0D8"/>
 <rect x="7.8" y="11.2" width="1.5" height="2.6" rx="0.6" fill="#2F6EE6"/>
 <rect x="11.1" y="11.2" width="1.5" height="2.6" rx="0.6" fill="#2F6EE6"/>
 <circle cx="10.2" cy="9.6" r="2.4" fill="#ECAA22" stroke="#C98A12" stroke-width="0.6"/>
 <circle cx="10.2" cy="9.4" r="1" fill="#F6CF5A"/></svg>
<div class="clip" style="left:372px;top:324px;width:179px;height:16px"><div class="t" style="left:2px;top:0;letter-spacing:-0.29px;">UTN-USERFirst-Hardware</div></div>
<div class="clip" style="left:556px;top:324px;width:196px;height:16px"><div class="t" style="left:2px;top:0;letter-spacing:-0.29px;">UTN-USERFirst-Hardware</div></div>
<div class="t" style="left:759px;top:324px;letter-spacing:-0.2px;">7/9/2019</div>
<svg style="left:356px;top:342px" width="16" height="15" viewBox="0 0 16 15"><rect x="0.7" y="0.7" width="14.6" height="9.9" fill="#FFFDF6" stroke="#A08D6C" stroke-width="1.4"/>
 <rect x="2.6" y="2.9" width="10" height="0.9" fill="#8FA0D8"/>
 <rect x="6" y="4.8" width="3" height="0.7" fill="#C7CFEA"/>
 <rect x="2.6" y="6.8" width="2.2" height="1" fill="#8FA0D8"/>
 <rect x="7.8" y="11.2" width="1.5" height="2.6" rx="0.6" fill="#2F6EE6"/>
 <rect x="11.1" y="11.2" width="1.5" height="2.6" rx="0.6" fill="#2F6EE6"/>
 <circle cx="10.2" cy="9.6" r="2.4" fill="#ECAA22" stroke="#C98A12" stroke-width="0.6"/>
 <circle cx="10.2" cy="9.4" r="1" fill="#F6CF5A"/></svg>
<div class="clip" style="left:372px;top:343px;width:179px;height:16px"><div class="t" style="left:2px;top:0;letter-spacing:-0.26px;">UTN-USERFirst-Object</div></div>
<div class="clip" style="left:556px;top:343px;width:196px;height:16px"><div class="t" style="left:2px;top:0;letter-spacing:-0.26px;">UTN-USERFirst-Object</div></div>
<div class="t" style="left:759px;top:343px;letter-spacing:-0.2px;">7/9/2019</div>
<svg style="left:356px;top:361px" width="16" height="15" viewBox="0 0 16 15"><rect x="0.7" y="0.7" width="14.6" height="9.9" fill="#FFFDF6" stroke="#A08D6C" stroke-width="1.4"/>
 <rect x="2.6" y="2.9" width="10" height="0.9" fill="#8FA0D8"/>
 <rect x="6" y="4.8" width="3" height="0.7" fill="#C7CFEA"/>
 <rect x="2.6" y="6.8" width="2.2" height="1" fill="#8FA0D8"/>
 <rect x="7.8" y="11.2" width="1.5" height="2.6" rx="0.6" fill="#2F6EE6"/>
 <rect x="11.1" y="11.2" width="1.5" height="2.6" rx="0.6" fill="#2F6EE6"/>
 <circle cx="10.2" cy="9.6" r="2.4" fill="#ECAA22" stroke="#C98A12" stroke-width="0.6"/>
 <circle cx="10.2" cy="9.4" r="1" fill="#F6CF5A"/></svg>
<div class="clip" style="left:372px;top:362px;width:179px;height:16px"><div class="t" style="left:2px;top:0;letter-spacing:-0.1px;">VeriSign Class 3 Public Primary Ce...</div></div>
<div class="clip" style="left:556px;top:362px;width:196px;height:16px"><div class="t" style="left:2px;top:0;letter-spacing:-0.21px;">VeriSign Class 3 Public Primary Ce...</div></div>
<div class="t" style="left:759px;top:362px;letter-spacing:-0.2px;">7/16/2036</div>
<svg style="left:356px;top:380px" width="16" height="15" viewBox="0 0 16 15"><rect x="0.7" y="0.7" width="14.6" height="9.9" fill="#FFFDF6" stroke="#A08D6C" stroke-width="1.4"/>
 <rect x="2.6" y="2.9" width="10" height="0.9" fill="#8FA0D8"/>
 <rect x="6" y="4.8" width="3" height="0.7" fill="#C7CFEA"/>
 <rect x="2.6" y="6.8" width="2.2" height="1" fill="#8FA0D8"/>
 <rect x="7.8" y="11.2" width="1.5" height="2.6" rx="0.6" fill="#2F6EE6"/>
 <rect x="11.1" y="11.2" width="1.5" height="2.6" rx="0.6" fill="#2F6EE6"/>
 <circle cx="10.2" cy="9.6" r="2.4" fill="#ECAA22" stroke="#C98A12" stroke-width="0.6"/>
 <circle cx="10.2" cy="9.4" r="1" fill="#F6CF5A"/></svg>
<div class="clip" style="left:372px;top:381px;width:179px;height:16px"><div class="t" style="left:2px;top:0;letter-spacing:-0.1px;">VeriSign Class 3 Public Primary Ce...</div></div>
<div class="clip" style="left:556px;top:381px;width:196px;height:16px"><div class="t" style="left:2px;top:0;letter-spacing:-0.21px;">VeriSign Class 3 Public Primary Ce...</div></div>
<div class="t" style="left:759px;top:381px;letter-spacing:-0.2px;">1/18/2038</div>
<svg style="left:356px;top:399px" width="16" height="15" viewBox="0 0 16 15"><rect x="0.7" y="0.7" width="14.6" height="9.9" fill="#FFFDF6" stroke="#A08D6C" stroke-width="1.4"/>
 <rect x="2.6" y="2.9" width="10" height="0.9" fill="#8FA0D8"/>
 <rect x="6" y="4.8" width="3" height="0.7" fill="#C7CFEA"/>
 <rect x="2.6" y="6.8" width="2.2" height="1" fill="#8FA0D8"/>
 <rect x="7.8" y="11.2" width="1.5" height="2.6" rx="0.6" fill="#2F6EE6"/>
 <rect x="11.1" y="11.2" width="1.5" height="2.6" rx="0.6" fill="#2F6EE6"/>
 <circle cx="10.2" cy="9.6" r="2.4" fill="#ECAA22" stroke="#C98A12" stroke-width="0.6"/>
 <circle cx="10.2" cy="9.4" r="1" fill="#F6CF5A"/></svg>
<div class="clip" style="left:372px;top:400px;width:179px;height:16px"><div class="t" style="left:2px;top:0;letter-spacing:-0.1px;">VeriSign Class 3 Public Primary Ce...</div></div>
<div class="clip" style="left:556px;top:400px;width:196px;height:16px"><div class="t" style="left:2px;top:0;letter-spacing:-0.21px;">VeriSign Class 3 Public Primary Ce...</div></div>
<div class="t" style="left:759px;top:400px;letter-spacing:-0.2px;">7/16/2036</div>
</div></div>
<!-- list header -->
<div class="a" style="left:351px;top:110px;width:501px;height:1px;background:#E5ECF4"></div>
<div class="a" style="left:551px;top:86px;width:1px;height:24px;background:#E5ECF4"></div>
<div class="a" style="left:752px;top:86px;width:1px;height:24px;background:#E5ECF4"></div>
<div class="t" style="left:358px;top:94px">Issued To</div>
<div class="t" style="left:558px;top:94px;letter-spacing:-0.35px">Issued By</div>
<div class="t" style="left:759px;top:94px;letter-spacing:-0.19px">Expiration Date</div>
<svg style="left:449px;top:88px" width="8" height="5" viewBox="0 0 8 5"><defs><linearGradient id="gsort" x1="0" y1="0" x2="1" y2="0"><stop offset="0" stop-color="#3E5F80"/><stop offset="1" stop-color="#9AD2F2"/></linearGradient></defs><path d="M0 4.3L3.4 0.4L7 4.3Z" fill="url(#gsort)"/></svg>

<!-- vertical scrollbar -->
<div class="a" style="left:852px;top:86px;width:17px;height:318px;background:#F0F0F0"></div>
<div class="a" style="left:852px;top:287px;width:15px;height:88px;background:#CDCDCD"></div>
<svg style="left:855px;top:93px" width="9" height="6" viewBox="0 0 9 6"><path d="M1 5L4.5 1.5L8 5" fill="none" stroke="#505050" stroke-width="1.8"/></svg>
<svg style="left:855px;top:393px" width="9" height="6" viewBox="0 0 9 6"><path d="M1 1.3L4.5 4.6L8 1.3" fill="none" stroke="#505050" stroke-width="1.8"/></svg>
<!-- horizontal scrollbar -->
<div class="a" style="left:351px;top:404px;width:518px;height:17px;background:#F0F0F0"></div>
<div class="a" style="left:369px;top:405px;width:257px;height:15px;background:#CDCDCD"></div>
<svg style="left:357px;top:408px" width="6" height="9" viewBox="0 0 6 9"><path d="M4.8 1.3L1.5 4.5L4.8 7.7" fill="none" stroke="#505050" stroke-width="1.8"/></svg>
<svg style="left:840px;top:408px" width="6" height="9" viewBox="0 0 6 9"><path d="M1.2 1.3L4.5 4.5L1.2 7.7" fill="none" stroke="#505050" stroke-width="1.8"/></svg>

<!-- context menu -->
<div class="a" style="left:537px;top:220px;width:144px;height:187px;background:rgba(0,0,0,0.32);filter:blur(0.9px)"></div>
<div class="a" style="left:535px;top:217px;width:144px;height:188px;background:#F0F0F0;border:1px solid #979797"></div>
<div class="a" style="left:565px;top:218px;width:1px;height:185px;background:#E2E3E3"></div>
<div class="a" style="left:566px;top:218px;width:1px;height:185px;background:#FFFFFF"></div>
<div class="a" style="left:566px;top:244px;width:109px;height:1px;background:#E0E0E0"></div>
<div class="a" style="left:566px;top:245px;width:109px;height:1px;background:#FFFFFF"></div>
<div class="a" style="left:566px;top:273px;width:109px;height:1px;background:#E0E0E0"></div>
<div class="a" style="left:566px;top:274px;width:109px;height:1px;background:#FFFFFF"></div>
<div class="a" style="left:566px;top:346px;width:109px;height:1px;background:#E0E0E0"></div>
<div class="a" style="left:566px;top:347px;width:109px;height:1px;background:#FFFFFF"></div>
<div class="a" style="left:566px;top:375px;width:109px;height:1px;background:#E0E0E0"></div>
<div class="a" style="left:566px;top:376px;width:109px;height:1px;background:#FFFFFF"></div>
<div class="a" style="left:538px;top:322px;width:138px;height:22px;background:#D1E3F5;border:1px solid #84B9EC;border-radius:2px"></div>
<div class="a" style="left:565px;top:323px;width:1px;height:20px;background:#BCD3EA"></div>
<div class="t" style="left:570px;top:225px">Open</div>
<div class="t" style="left:570px;top:254px">All Tasks</div>
<svg style="left:662px;top:256px" width="5" height="8" viewBox="0 0 5 8"><path d="M0.5 0.5L4.5 4L0.5 7.5Z" fill="#222"/></svg>
<div class="t" style="left:570px;top:283px">Cut</div>
<div class="t" style="left:570px;top:305px">Copy</div>
<div class="t" style="left:570px;top:327px">Delete</div>
<div class="t" style="left:570px;top:356px">Properties</div>
<div class="t" style="left:570px;top:385px">Help</div>

<!-- status bar -->
<div class="t" style="left:11px;top:430px;letter-spacing:-0.085px">Deletes the current selection.</div>
<div class="a" style="left:649px;top:425px;width:1px;height:19px;background:#DADADA"></div>
<div class="a" style="left:782px;top:425px;width:1px;height:19px;background:#DADADA"></div>
<div class="a" style="left:867px;top:425px;width:1px;height:19px;background:#DADADA"></div><div class="a" style="left:868px;top:425px;width:1px;height:19px;background:#FFFFFF"></div>

<!-- red boxes -->
<svg style="left:0;top:0" width="880" height="455" viewBox="0 0 880 455">
 <rect x="162.6" y="50.7" width="40.3" height="39.5" fill="none" stroke="#EC1C24" stroke-width="4.9"/>
 <rect x="352.4" y="205" width="177" height="21.9" fill="none" stroke="#EC1C24" stroke-width="4.8"/>
 <rect x="529.5" y="318.25" width="154.5" height="28.65" fill="none" stroke="#EC1C24" stroke-width="4.9"/>
</svg>
</body></html>
